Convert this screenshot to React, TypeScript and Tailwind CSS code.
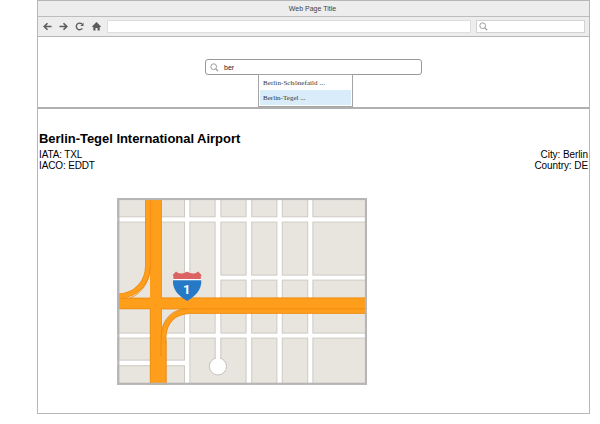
const blocks: [number, number, number, number][] = [
  [117, 197, 185, 217.3],
  [189.4, 197, 215.6, 217.3],
  [220.4, 197, 246.6, 217.3],
  [251.2, 197, 277.4, 217.3],
  [281.8, 197, 308.2, 217.3],
  [312.4, 197, 369, 217.3],
  [117, 221.6, 185, 333.6],
  [189.4, 221.6, 215.6, 333.6],
  [220.4, 221.6, 246.6, 275.6],
  [251.2, 221.6, 277.4, 275.6],
  [281.8, 221.6, 308.2, 275.6],
  [312.4, 221.6, 369, 275.6],
  [220.4, 279.6, 246.6, 333.6],
  [251.2, 279.6, 277.4, 333.6],
  [281.8, 279.6, 308.2, 333.6],
  [312.4, 279.6, 369, 333.6],
  [117, 337.6, 185, 360.6],
  [117, 365.2, 185, 387],
  [189.4, 337.6, 246.6, 387],
  [251.2, 337.6, 277.4, 387],
  [281.8, 337.6, 308.2, 387],
  [312.4, 337.6, 369, 387],
];

function CityMap() {
  return (
    <svg className="block h-[187px] w-[250px]" viewBox="117 198 250 187">
      <rect x="117" y="198" width="250" height="187" fill="#fff" />
      {blocks.map(([x1, y1, x2, y2], i) => (
        <rect key={i} x={x1 + 0.5} y={y1 + 0.5} width={x2 - x1 - 1} height={y2 - y1 - 1} fill="#e8e4de" stroke="#cdcac3" />
      ))}
      <rect x="215.6" y="335" width="4.8" height="26" fill="#fff" />
      <path d="M215.1 338V360M220.9 338V360" stroke="#cdcac3" />
      <circle cx="217.9" cy="366.4" r="8.6" fill="#fff" stroke="#c4c1ba" strokeWidth="1" />
      <rect x="216" y="355" width="4" height="6" fill="#fff" />

      <g fill="none" stroke="#e98a12" strokeWidth="5.6">
        <path d="M147.9 197V265C147.9 282 137 296 117 296.3" />
        <path d="M190 311.2C174 311.2 163.6 322 163.6 338V387" />
      </g>
      <path d="M150 197H161.6V297.8H369V313.6H188V309H161.6V345H166V387H150V309H117V297.8H150Z" fill="#ff9e1b" />
      <path d="M161.4 197V297.9H369M369 313.4H190M150.3 387V308.8H117M117 298.2H150M161.5 309H188M161.5 309V338" fill="none" stroke="#e98a12" strokeWidth="0.8" />
      <g fill="none" stroke="#ff9e1b" strokeWidth="4.2">
        <path d="M147.9 197V265C147.9 282 137 296 117 296.3" />
        <path d="M190 311.2C174 311.2 163.6 322 163.6 338V387" />
      </g>
      <path d="M150.6 197V265C150.6 278 144 293 130 298M369 308.8H188C171 308.8 161.1 320 161.1 338V356M166.1 340V387" fill="none" stroke="#ed8811" strokeWidth="0.8" />

      <path d="M173 278.4H201.3V281H173Z" fill="#fff" />
      <path d="M176 271.6Q178.5 273.8 181.5 273.4Q184.5 273.2 187.1 271.4Q189.7 273.2 192.7 273.4Q195.7 273.8 198.2 271.6L201.4 275Q200.4 277 200.9 278.9H173.3Q174 277 172.8 275Z" fill="#dc6263" />
      <path d="M173 280.2H201.3C202 290 194.5 296.5 187.2 301C179.5 296.5 172.2 290 173 280.2Z" fill="#2679c6" />
      <text x="186.7" y="294.2" textAnchor="middle" fontSize="13" fontWeight="700" fill="#fff" className="font-[Roboto,sans-serif]">1</text>
      <rect x="118.3" y="199" width="247.7" height="184.8" fill="none" stroke="#b5b5b5" strokeWidth="2.2" />
    </svg>
  );
}

function SearchIcon({ className }: { className: string }) {
  return (
    <svg className={className} viewBox="0 0 10 10" fill="none" stroke="#929292">
      <circle cx="4.1" cy="4.1" r="3.2" strokeWidth="1" />
      <path d="M6.5 6.5L9 9" strokeWidth="1.3" />
    </svg>
  );
}

function NavIcons() {
  return (
    <svg className="h-[14px] w-[66px] shrink-0" viewBox="40 19.5 66 14" fill="none" stroke="#5c5c5c" strokeWidth="1.6">
      <path d="M51.5 26H44.3M47.5 22.7L44.2 26L47.5 29.3" />
      <path d="M59.5 26H66.7M63.5 22.7L66.8 26L63.5 29.3" />
      <path d="M82 23.6A3.3 3.3 0 1 0 82.3 27.8" strokeWidth="1.4" />
      <path d="M83.5 22V25.4H80.4Z" fill="#5c5c5c" stroke="none" />
      <path d="M96.5 21.6L101 26L100.3 26.8L99.7 26.3V30H97.5V27.4H95.5V30H93.3V26.3L92.7 26.8L92 26Z" fill="#5c5c5c" stroke="none" />
    </svg>
  );
}

export default function App() {
  return (
    <div className="h-[424px] w-[600px] overflow-hidden bg-white pl-[37px] font-['Liberation_Sans',Arial,sans-serif] text-black">
      <div className="flex h-[414px] w-[553px] flex-col border border-[#b7b7b7]">
        <header className="h-[36px] shrink-0 border-b border-[#b7b7b7] bg-[#ededed]">
          <div className="flex h-4 items-center justify-center border-b border-[#bdbdbd] pt-px pr-[2px] text-[7px] text-[#444]">Web Page Title</div>
          <div className="flex h-[19px] items-center pl-[2px]">
            <NavIcons />
            <div className="ml-[1px] h-[13px] w-[364px] border border-[#dedede] bg-white" />
            <div className="ml-[5px] flex h-[13px] w-[109px] items-center border border-[#d2d2d2] bg-white pl-[2px]">
              <SearchIcon className="size-[9px]" />
            </div>
          </div>
        </header>

        <section className="relative h-[72px] shrink-0 border-b-2 border-[#b0b0b0] pt-[22px]">
          <div className="ml-[167px] flex h-4 w-[217px] items-center rounded-[3px] border border-[#999] bg-white pl-[4px]">
            <SearchIcon className="size-[9px]" />
            <span className="ml-[5px] text-[7px] leading-none text-[#222]">ber</span>
          </div>
          <ul className="absolute top-[37px] left-[220px] h-[33px] w-[95px] border border-[#a5a5a5] bg-white font-['Liberation_Serif',serif] text-[7px] text-[#333]">
            <li className="flex h-[15px] items-center pt-[2px] pl-1 tracking-[0.08px]">Berlin-Schönefaild ...</li>
            <li className="mx-px flex h-[15px] items-center bg-[#d9ecfa] pt-px pl-[3px] tracking-[0.02px]">Berlin-Tegel ...</li>
          </ul>
        </section>

        <main className="pt-[22px]">
          <h1 className="pl-[1px] text-[13px] leading-[16px] font-bold tracking-[-0.03px] whitespace-nowrap">Berlin-Tegel International Airport</h1>
          <div className="mt-[2px] flex justify-between pr-px pl-[1px] text-[10px] leading-[11px] tracking-[-0.14px]">
            <div>
              <p>IATA: TXL</p>
              <p>IACO: EDDT</p>
            </div>
            <div className="text-right tracking-[-0.08px]">
              <p>City: Berlin</p>
              <p>Country: DE</p>
            </div>
          </div>
          <div className="mt-[27px] ml-[79px]">
            <CityMap />
          </div>
        </main>
      </div>
    </div>
  );
}
